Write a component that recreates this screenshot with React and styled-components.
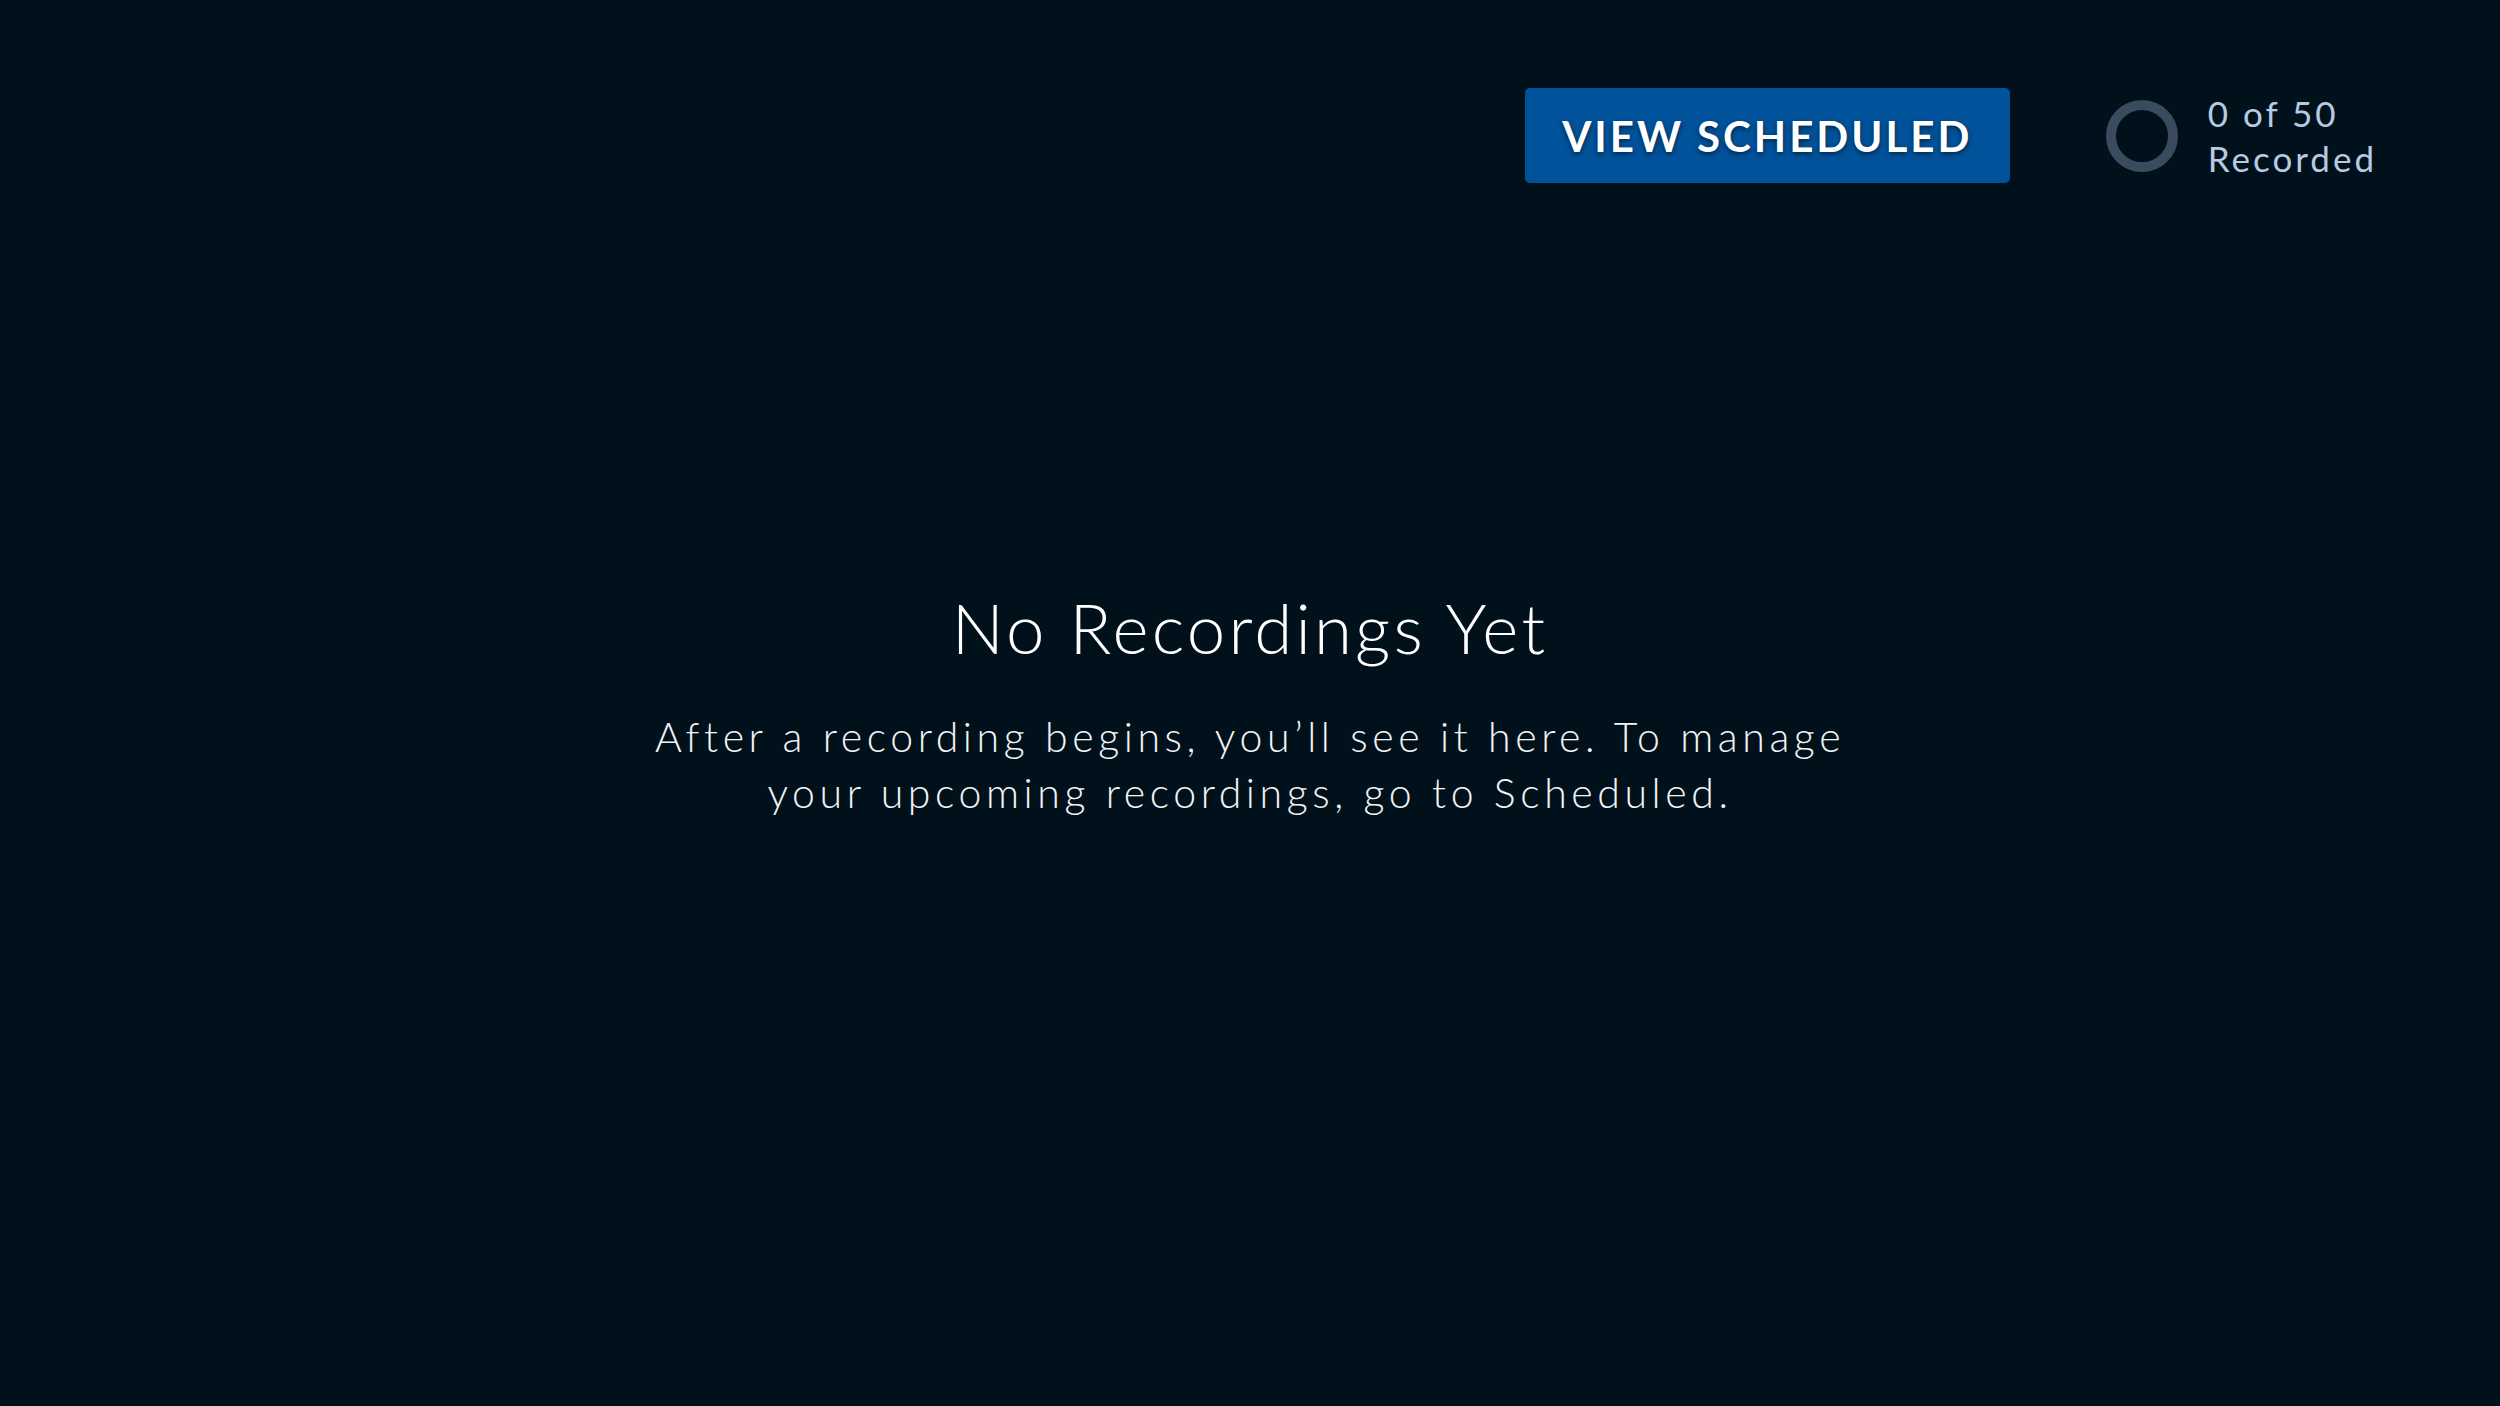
import React from "react";
import styled, { createGlobalStyle } from "styled-components";

const GlobalStyle = createGlobalStyle`
  html, body {
    margin: 0;
    padding: 0;
    background: #01111b;
  }
  body {
    font-family: Lato, "Noto Sans", sans-serif;
    -webkit-font-smoothing: antialiased;
  }
`;

const Page = styled.div`
  width: 100%;
  min-height: 100vh;
  background: #01111b;
  display: flex;
  flex-direction: column;
`;

const Header = styled.header`
  display: flex;
  justify-content: flex-end;
  align-items: center;
  padding: 88px 123px 0 0;
`;

const PrimaryButton = styled.button`
  height: 95px;
  width: 485px;
  border: none;
  border-radius: 5px;
  background: #00529b;
  color: #ffffff;
  font-family: Lato, "Noto Sans", sans-serif;
  font-weight: 700;
  font-size: 42px;
  letter-spacing: 3px;
  text-transform: uppercase;
  text-shadow: 0 2px 5px rgba(0, 0, 0, 0.55);
  display: flex;
  align-items: center;
  justify-content: center;
  cursor: pointer;
`;

const Usage = styled.div`
  display: flex;
  align-items: center;
  gap: 30px;
  margin-left: 96px;
`;

const Ring = styled.svg`
  width: 72px;
  height: 72px;
  display: block;
`;

const UsageText = styled.div`
  color: #b6cbe1;
  font-size: 35px;
  line-height: 45px;
  font-weight: 400;
  letter-spacing: 3px;
`;

const Main = styled.main`
  display: flex;
  flex-direction: column;
  align-items: center;
  padding-top: 405px;
  text-align: center;
`;

const Title = styled.h1`
  margin: 0;
  color: #ffffff;
  font-weight: 300;
  font-size: 69px;
  line-height: 80px;
  letter-spacing: 3.2px;
`;

const Subtitle = styled.p`
  margin: 41px 0 0;
  color: #f2f4f6;
  font-weight: 300;
  font-size: 41px;
  line-height: 56px;
  letter-spacing: 4.6px;
`;

export default function App() {
  return (
    <Page>
      <GlobalStyle />
      <Header>
        <PrimaryButton>View Scheduled</PrimaryButton>
        <Usage>
          <Ring viewBox="0 0 72 72">
            <circle cx="36" cy="36" r="31" fill="none" stroke="#3a4a5f" strokeWidth="10" />
          </Ring>
          <UsageText>
            0 of 50
            <br />
            Recorded
          </UsageText>
        </Usage>
      </Header>
      <Main>
        <Title>No Recordings Yet</Title>
        <Subtitle>
          After a recording begins, you’ll see it here. To manage
          <br />
          your upcoming recordings, go to Scheduled.
        </Subtitle>
      </Main>
    </Page>
  );
}
